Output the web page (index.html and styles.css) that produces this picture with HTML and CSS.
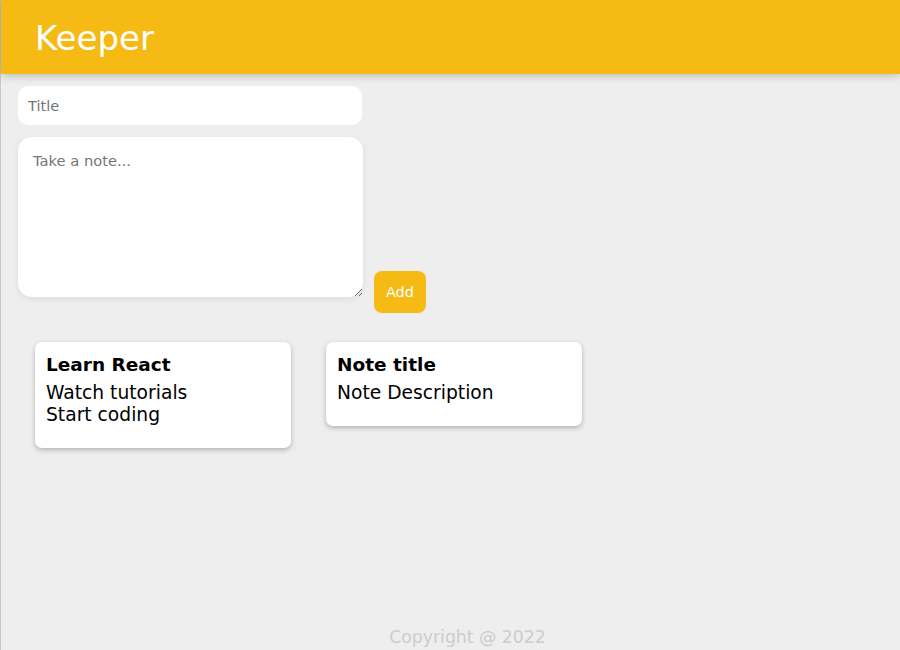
FILE: index.html
```html
<!DOCTYPE html>
<html>
<head>
<meta charset="utf-8">
<title>Keeper</title>
<link rel="stylesheet" href="styles.css">
</head>
<body>
<div class="page">
  <header class="header">
    <h1 class="logo">Keeper</h1>
  </header>
  <form class="create-note">
    <input class="title-input" type="text" placeholder="Title">
    <div class="note-row">
      <textarea class="note-input" placeholder="Take a note..."></textarea>
      <button class="add-btn" type="button">Add</button>
    </div>
  </form>
  <div class="notes">
    <div class="note">
      <h2 class="note-title">Learn React</h2>
      <p class="note-text">Watch tutorials<br>Start coding</p>
    </div>
    <div class="note">
      <h2 class="note-title">Note title</h2>
      <p class="note-text">Note Description</p>
    </div>
  </div>
  <footer class="footer">Copyright @ 2022</footer>
</div>
</body>
</html>
```
FILE: styles.css
```css
html, body {
  margin: 0;
  padding: 0;
}
body {
  background: #eeeeee;
  font-family: "DejaVu Sans", Verdana, sans-serif;
}
.page {
  min-height: 650px;
  box-sizing: border-box;
  display: flex;
  flex-direction: column;
  border-left: 1px solid #c8c8c8;
}
.header {
  background: #f5ba13;
  padding: 17px 34px 15px;
  box-shadow: 0 0 10px rgba(0, 0, 0, 0.3);
  position: relative;
  z-index: 1;
}
.logo {
  margin: 0;
  color: #fff;
  font-size: 34px;
  font-weight: 400;
  line-height: 42px;
}
.create-note {
  display: flex;
  flex-direction: column;
  gap: 12px;
  padding: 12px 0 0 17px;
}
.title-input {
  width: 344px;
  height: 39px;
  box-sizing: border-box;
  border: none;
  border-radius: 10px;
  background: #fff;
  padding: 0 10px;
  font-family: "DejaVu Sans", Verdana, sans-serif;
  font-size: 14.5px;
  outline: none;
}
.title-input::placeholder,
.note-input::placeholder {
  color: #757575;
}
.note-row {
  display: flex;
  align-items: flex-end;
  gap: 11px;
}
.note-input {
  width: 345px;
  height: 160px;
  box-sizing: border-box;
  border: none;
  border-radius: 14px;
  background: #fff;
  padding: 15px 15px;
  margin-bottom: 16px;
  font-family: "DejaVu Sans", Verdana, sans-serif;
  font-size: 14.7px;
  box-shadow: 0 2px 6px rgba(0, 0, 0, 0.08);
  outline: none;
}
.add-btn {
  width: 52px;
  height: 42px;
  border: none;
  border-radius: 8px;
  background: #f5ba13;
  color: #fff;
  font-family: "DejaVu Sans", Verdana, sans-serif;
  font-size: 14.5px;
  padding: 0;
}
.notes {
  display: flex;
  align-items: flex-start;
  gap: 35px;
  padding: 29px 0 0 34px;
}
.note {
  width: 256px;
  box-sizing: border-box;
  background: #fff;
  border-radius: 7px;
  padding: 11px 11px 22px;
  box-shadow: 0 2px 5px rgba(0, 0, 0, 0.25);
}
.note-title {
  margin: 0 0 6px;
  font-size: 18.5px;
  line-height: 23px;
  font-weight: 700;
  color: #000;
}
.note-text {
  margin: 0;
  font-size: 18.7px;
  line-height: 22px;
  color: #000;
}
.footer {
  margin-top: auto;
  text-align: center;
  padding: 0 0 2px 34px;
  color: #cccccc;
  font-size: 17.3px;
  line-height: 22px;
}
```
